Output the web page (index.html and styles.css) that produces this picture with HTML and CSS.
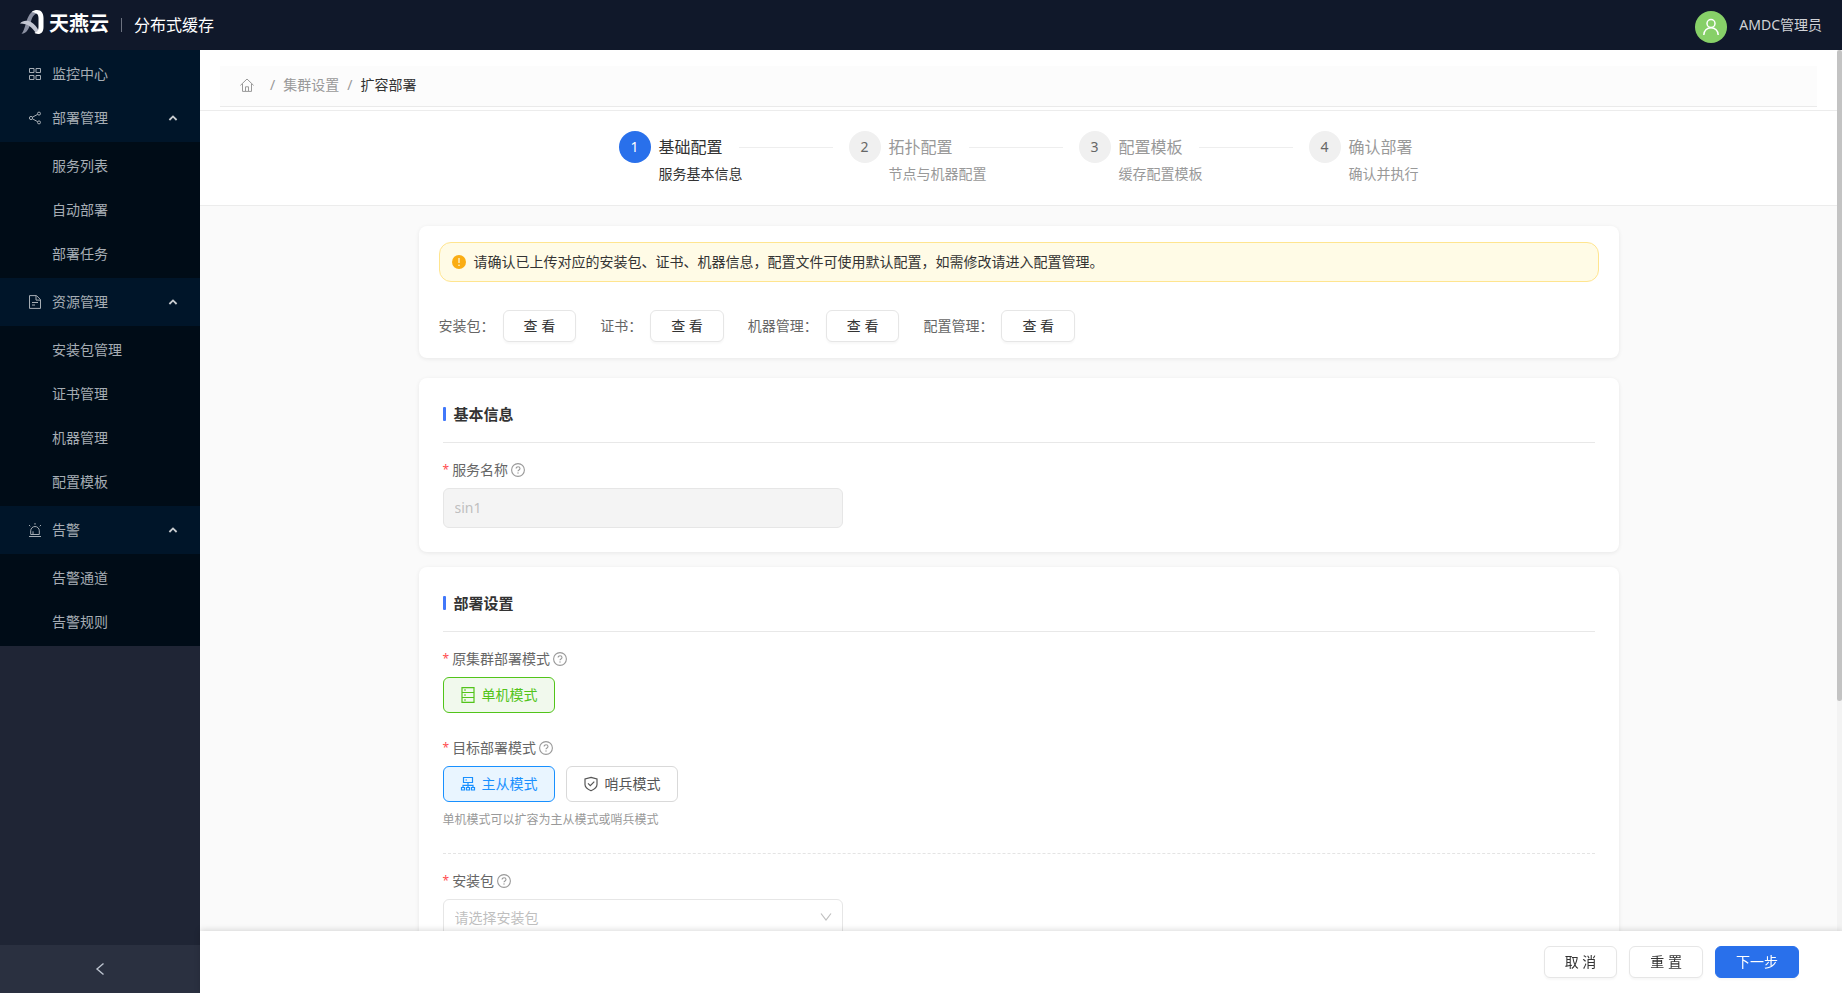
FILE: index.html
```html
<!DOCTYPE html>
<html lang="zh-CN">
<head>
    <meta charset="UTF-8">
    <title>分布式缓存</title>
    <link rel="stylesheet" href="styles.css">
</head>
<body>
    <svg class="sprite" aria-hidden="true">
        <symbol id="i-help" viewBox="0 0 14 14">
            <circle cx="7" cy="7" r="6.4" fill="none" stroke="currentColor" stroke-width="1.1"/>
            <path d="M5.1 5.6c0-2.5 3.9-2.4 3.9 0 0 1.4-2 1.3-2 2.7" fill="none" stroke="currentColor" stroke-width="1.1"/>
            <circle cx="7" cy="10" r=".7" fill="currentColor"/>
        </symbol>
        <symbol id="i-up" viewBox="0 0 10 10">
            <path d="M1.4 7 5 3.4 8.6 7" fill="none" stroke="currentColor" stroke-width="1.8"/>
        </symbol>
    </svg>

    <header class="header">
        <svg class="logo" viewBox="0 0 24 24">
            <path d="M1.500 23.800C3.500 22 4.500 18 6 13 8 6 10.500 1 16.500.200L17 3.500C13 4.500 12 8 10.500 13 9 18.500 7 23.500 1.500 23.800z" fill="#8b90a2"/>
            <path d="M0 13.500C2.500 10.500 7 10 11 12 14.500 14 17 17 18.500 20.500L16 23.500C12.500 17.500 8 13.500 0 13.500z" fill="#c3c6d2"/>
            <path d="M11.500 2.300C13.500.300 15.500 0 17 0 21.500 0 23.500 3.500 23.500 8V17C23.500 21.500 21.500 24 18 24 16.500 24 15.200 23.500 14.500 22.800 17.300 22 18.500 20.500 18.500 17V8C18.500 4.500 16.500 2.300 11.500 2.300z" fill="#fff"/>
        </svg>
        <span class="brand">天燕云</span>
        <span class="divider"></span>
        <span class="product">分布式缓存</span>
        <div class="user">
            <span class="avatar">
                <svg viewBox="0 0 18 18" width="18" height="18" fill="none" stroke="#fff" stroke-width="1.5">
                    <circle cx="9" cy="5.500" r="4"/>
                    <path d="M1.800 17c0-4.200 3.200-7.200 7.200-7.200s7.200 3 7.200 7.200"/>
                </svg>
            </span>
            <span>AMDC管理员</span>
        </div>
    </header>

    <div class="layout">
        <nav class="sider">
            <div class="menu">
                <div class="group">
                    <a class="item" href="#">
                        <svg class="icon" viewBox="0 0 14 14"><path d="M1.500 1.500h4.500v4H1.500zM8 1.500h4.500v4H8zM1.500 8.500h4.500v4H1.500zM8 8.500h4.500v4H8z"/></svg>
                        监控中心
                    </a>
                    <button class="item" type="button">
                        <svg class="icon" viewBox="0 0 14 14"><circle cx="3" cy="7" r="1.600"/><circle cx="11" cy="2.600" r="1.500"/><circle cx="11" cy="11.400" r="1.500"/><path d="M4.400 6.200l5.300-2.900M4.400 7.800l5.300 2.900"/></svg>
                        部署管理
                        <svg class="arrow"><use href="#i-up"/></svg>
                    </button>
                </div>
                <div class="submenu">
                    <a class="item" href="#">服务列表</a>
                    <a class="item" href="#">自动部署</a>
                    <a class="item" href="#">部署任务</a>
                </div>
                <div class="group">
                    <button class="item" type="button">
                        <svg class="icon" viewBox="0 0 14 14"><path d="M1.500.600h7l4 4v8.800h-11zM8 .600v4.500h4.500M4 7.500h6M4 10h3"/></svg>
                        资源管理
                        <svg class="arrow"><use href="#i-up"/></svg>
                    </button>
                </div>
                <div class="submenu">
                    <a class="item" href="#">安装包管理</a>
                    <a class="item" href="#">证书管理</a>
                    <a class="item" href="#">机器管理</a>
                    <a class="item" href="#">配置模板</a>
                </div>
                <div class="group">
                    <button class="item" type="button">
                        <svg class="icon" viewBox="0 0 14 14"><path d="M1 13.500h12M2.700 11.500V7.800a4.300 4.300 0 0 1 8.600 0v3.700zM7 0v1.700M1 2l1.300 1.300M13 2l-1.300 1.300M5 8.300v3"/></svg>
                        告警
                        <svg class="arrow"><use href="#i-up"/></svg>
                    </button>
                </div>
                <div class="submenu">
                    <a class="item" href="#">告警通道</a>
                    <a class="item" href="#">告警规则</a>
                </div>
            </div>
            <button class="trigger" type="button" aria-label="收起菜单">
                <svg viewBox="0 0 14 14" width="14" height="14" fill="none" stroke="currentColor" stroke-width="1.400"><path d="M10.500 1.500 4 7l6.500 5.500"/></svg>
            </button>
        </nav>

        <div class="page">
            <main class="main">
                <div class="topbar">
                    <div class="breadcrumb">
                        <a class="home" href="#" aria-label="首页">
                            <svg viewBox="0 0 14 14" width="14" height="14" fill="none" stroke="currentColor"><path d="M.400 7.400 7 1l6.600 6.400M2.500 6v7.400h9V6M5.500 13V8.800h3V13"/></svg>
                        </a>
                        <span>/</span>
                        <a href="#">集群设置</a>
                        <span>/</span>
                        <span class="current">扩容部署</span>
                    </div>
                </div>

                <div class="steps-wrap">
                    <div class="steps">
                        <div class="step active">
                            <span class="num">1</span>
                            <div class="step-body">
                                <div class="step-title">基础配置</div>
                                <div class="step-desc">服务基本信息</div>
                            </div>
                        </div>
                        <div class="step">
                            <span class="num">2</span>
                            <div class="step-body">
                                <div class="step-title">拓扑配置</div>
                                <div class="step-desc">节点与机器配置</div>
                            </div>
                        </div>
                        <div class="step">
                            <span class="num">3</span>
                            <div class="step-body">
                                <div class="step-title">配置模板</div>
                                <div class="step-desc">缓存配置模板</div>
                            </div>
                        </div>
                        <div class="step">
                            <span class="num">4</span>
                            <div class="step-body">
                                <div class="step-title">确认部署</div>
                                <div class="step-desc">确认并执行</div>
                            </div>
                        </div>
                    </div>
                </div>

                <div class="content">
                    <section class="card notice">
                        <div class="alert">
                            <svg viewBox="0 0 14 14" width="14" height="14"><circle cx="7" cy="7" r="7" fill="#faad14"/><path d="M7 3v5" stroke="#fffbe6" stroke-width="1.200"/><circle cx="7" cy="10.300" r=".8" fill="#fffbe6"/></svg>
                            <span>请确认已上传对应的安装包、证书、机器信息，配置文件可使用默认配置，如需修改请进入配置管理。</span>
                        </div>
                        <div class="links">
                            <div class="link-item"><span>安装包：</span><button class="btn" type="button">查 看</button></div>
                            <div class="link-item"><span>证书：</span><button class="btn" type="button">查 看</button></div>
                            <div class="link-item"><span>机器管理：</span><button class="btn" type="button">查 看</button></div>
                            <div class="link-item"><span>配置管理：</span><button class="btn" type="button">查 看</button></div>
                        </div>
                    </section>

                    <section class="card basic">
                        <h2 class="card-title">基本信息</h2>
                        <div class="field">
                            <label class="label" for="service-name">服务名称<svg class="help"><use href="#i-help"/></svg></label>
                            <input class="control" id="service-name" type="text" value="sin1" disabled>
                        </div>
                    </section>

                    <section class="card">
                        <h2 class="card-title">部署设置</h2>
                        <div class="field">
                            <div class="label">原集群部署模式<svg class="help"><use href="#i-help"/></svg></div>
                            <div class="modes">
                                <button class="mode mode-origin" type="button">
                                    <svg viewBox="0 0 16 16" width="16" height="16" fill="none" stroke="currentColor" stroke-width="1.200"><path d="M2 .600h12v14.800H2zM2 5.500h12M2 10.500h12M4 3h2M4 8h2M4 13h2"/></svg>
                                    单机模式
                                </button>
                            </div>
                        </div>
                        <div class="field">
                            <div class="label">目标部署模式<svg class="help"><use href="#i-help"/></svg></div>
                            <div class="modes">
                                <button class="mode mode-selected" type="button" aria-pressed="true">
                                    <svg viewBox="0 0 16 16" width="16" height="16" fill="none" stroke="currentColor" stroke-width="1.200"><path d="M3.500 1.500h9v5h-9zM5.500 4h1.500M8 6.500v5M3 11.500v-2.200h10v2.200M1.500 11.500h3v2.500h-3zM6.500 11.500h3v2.500h-3zM11.500 11.500h3v2.500h-3z"/></svg>
                                    主从模式
                                </button>
                                <button class="mode" type="button" aria-pressed="false">
                                    <svg viewBox="0 0 16 16" width="16" height="16" fill="none" stroke="currentColor" stroke-width="1.200"><path d="M8 1.300 14 3v5.500c0 2.800-2.500 4.700-6 6.200-3.500-1.500-6-3.400-6-6.200V3zM5 7.300l2.300 2.300 4-4"/></svg>
                                    哨兵模式
                                </button>
                            </div>
                            <div class="hint">单机模式可以扩容为主从模式或哨兵模式</div>
                        </div>
                        <hr class="dashed">
                        <div class="field">
                            <label class="label" for="package">安装包<svg class="help"><use href="#i-help"/></svg></label>
                            <div class="select-wrap">
                                <select class="control" id="package">
                                    <option>请选择安装包</option>
                                </select>
                                <svg class="caret" viewBox="0 0 12 12" fill="none" stroke="currentColor" stroke-width="1.200"><path d="M1 2.500 6 9l5-6.500"/></svg>
                            </div>
                        </div>
                    </section>
                </div>
            </main>
            <div class="scrollbar"><div class="thumb"></div></div>

            <footer class="footer">
                <button class="btn" type="button">取 消</button>
                <button class="btn" type="button">重 置</button>
                <button class="btn primary" type="button">下一步</button>
            </footer>
        </div>
    </div>
</body>
</html>
```

FILE: styles.css
```css
* {
    box-sizing: border-box;
}
body {
    margin: 0;
    height: 100vh;
    display: flex;
    flex-direction: column;
    overflow: hidden;
    font-family: "Noto Sans", "Noto Sans CJK SC", sans-serif;
    font-size: 14px;
    line-height: 22px;
    color: #333;
}
button, input, select {
    font: inherit;
    color: inherit;
}
button {
    cursor: pointer;
}
a {
    color: inherit;
    text-decoration: none;
}
.sprite {
    display: none;
}

/* header */
.header {
    height: 50px;
    flex: none;
    display: flex;
    align-items: center;
    padding: 0 20px;
    background: #10182a;
    color: #fff;
}
.logo {
    width: 24px;
    height: 24px;
    margin-bottom: 6px;
}
.brand {
    margin: 0 12px 2px 5px;
    font-size: 20px;
    font-weight: 700;
}
.divider {
    width: 1px;
    height: 14px;
    background: #6c7280;
}
.product {
    margin-left: 12px;
    font-size: 16px;
}
.user {
    margin-left: auto;
    display: flex;
    align-items: center;
    gap: 12px;
    color: #d0d2d6;
}
.avatar {
    width: 32px;
    height: 32px;
    margin-top: 4px;
    border-radius: 50%;
    background: #87d068;
    display: flex;
    align-items: center;
    justify-content: center;
}

.layout {
    flex: 1;
    display: flex;
    min-height: 0;
}

/* sidebar */
.sider {
    width: 200px;
    flex: none;
    display: flex;
    flex-direction: column;
    background: #1f2535;
}
.menu {
    flex: 1;
}
.group, .submenu {
    display: flex;
    flex-direction: column;
    gap: 4px;
    padding: 4px 0;
    background: #001529;
}
.submenu {
    background: #000c17;
}
.item {
    height: 40px;
    display: flex;
    align-items: center;
    gap: 10px;
    padding: 0 22px 0 28px;
    border: 0;
    background: none;
    color: #a6adb4;
}
.submenu .item {
    padding-left: 52px;
}
.icon {
    width: 14px;
    height: 14px;
    fill: none;
    stroke: currentColor;
}
.arrow {
    width: 10px;
    height: 10px;
    margin-left: auto;
    color: #c8ccd0;
}
.trigger {
    height: 48px;
    border: 0;
    background: #2a3040;
    color: #bcc3cf;
    display: flex;
    align-items: center;
    justify-content: center;
}

/* page */
.page {
    flex: 1;
    min-width: 0;
    display: flex;
    position: relative;
}
.main {
    flex: 1;
    min-width: 0;
    overflow-y: auto;
    scrollbar-width: none;
    background: #fafafa;
}
.scrollbar {
    width: 5px;
    background: #f3f3f3;
}
.thumb {
    height: 69%;
    border-radius: 3px;
    background: #c3c3c3;
}
.topbar {
    padding: 16px 20px 3px;
    background: #fff;
    border-bottom: 1px solid #ececec;
}
.breadcrumb {
    height: 41px;
    display: flex;
    align-items: center;
    gap: 8px;
    padding: 0 20px 2px;
    background: #fcfcfc;
    border-bottom: 1px solid #eaeaea;
    color: #999;
}
.home {
    display: flex;
    margin-right: 8px;
}
.current {
    color: #333;
}

/* steps */
.steps-wrap {
    padding: 20px;
    background: #fff;
    border-bottom: 1px solid #ececec;
}
.steps {
    max-width: 800px;
    margin: 0 auto;
    display: flex;
    gap: 16px;
}
.step {
    flex: 1;
    display: flex;
    gap: 8px;
    color: #999;
}
.step:last-child {
    flex: none;
}
.num {
    width: 32px;
    height: 32px;
    flex: none;
    border-radius: 50%;
    background: #f0f0f0;
    color: #666;
    text-align: center;
    line-height: 32px;
}
.step-body {
    flex: 1;
}
.step-title {
    display: flex;
    align-items: center;
    gap: 16px;
    font-size: 16px;
    line-height: 32px;
}
.step:not(:last-child) .step-title::after {
    content: "";
    flex: 1;
    height: 1px;
    background: #eee;
}
.active {
    color: #333;
}
.active .num {
    background: #2970eb;
    color: #fff;
}

/* cards */
.content {
    max-width: 1240px;
    margin: 0 auto;
    padding: 20px 20px 464px;
}
.card {
    padding: 24px;
    background: #fff;
    border-radius: 8px;
    box-shadow: 0 1px 4px rgba(0, 0, 0, 0.08);
}
.notice {
    padding: 16px 20px;
    margin-bottom: 20px;
}
.basic {
    margin-bottom: 15px;
}
.alert {
    height: 40px;
    display: flex;
    align-items: center;
    gap: 8px;
    padding: 0 12px;
    margin-bottom: 28px;
    background: #fffbe6;
    border: 1px solid #ffe58f;
    border-radius: 12px;
}
.links {
    display: flex;
    gap: 24px;
    color: #666;
}
.link-item {
    display: flex;
    align-items: center;
    gap: 8px;
}
.btn {
    height: 32px;
    padding: 0 20px;
    border: 1px solid #e6e6e6;
    border-radius: 6px;
    background: #fff;
    color: #333;
    box-shadow: 0 2px 2px rgba(0, 0, 0, 0.03);
}
.primary {
    border-color: #2970eb;
    background: #2970eb;
    color: #fff;
}
.card-title {
    display: flex;
    align-items: center;
    gap: 8px;
    margin: 0 0 16px;
    padding-bottom: 16px;
    border-bottom: 1px solid #e8e8e8;
    font-size: 15px;
    font-weight: 600;
    line-height: 24px;
}
.card-title::before {
    content: "";
    width: 3px;
    height: 14px;
    border-radius: 1px;
    background: #4178fa;
}
.field + .field {
    margin-top: 24px;
}
.label {
    display: flex;
    align-items: center;
    margin-bottom: 7px;
    color: #666;
}
.label::before {
    content: "*";
    margin-right: 3px;
    color: #ff4d4f;
    font-size: 12px;
}
.help {
    width: 14px;
    height: 14px;
    margin-left: 3px;
    color: #999;
}
.control {
    display: block;
    width: 100%;
    max-width: 400px;
    height: 40px;
    padding: 0 11px 2px;
    border: 1px solid #e6e6e6;
    border-radius: 6px;
    background: #fff;
    color: #bfbfbf;
    appearance: none;
}
.control:disabled {
    background: #f4f4f4;
    opacity: 1;
}
.select-wrap {
    position: relative;
    max-width: 400px;
}
.caret {
    position: absolute;
    top: 12px;
    right: 11px;
    width: 12px;
    height: 12px;
    color: #bfbfbf;
    pointer-events: none;
}
.modes {
    display: flex;
    gap: 11px;
}
.mode {
    height: 36px;
    display: flex;
    align-items: center;
    gap: 6px;
    padding: 0 16px;
    border: 1px solid #d9d9d9;
    border-radius: 6px;
    background: #fff;
    color: #555;
}
.mode-origin {
    border-color: #52c41a;
    background: #f1f9ed;
    color: #52c41a;
}
.mode-selected {
    border-color: #1890ff;
    background: #e9f5ff;
    color: #1890ff;
}
.hint {
    margin-top: 8px;
    font-size: 12px;
    line-height: 20px;
    color: #999;
}
.dashed {
    margin: 23px 0 16px;
    border: 0;
    border-top: 1px dashed #e4e4e4;
}

/* action bar pinned over the scroll area */
.footer {
    position: absolute;
    left: 0;
    right: 0;
    bottom: 0;
    display: flex;
    justify-content: flex-end;
    gap: 12px;
    padding: 15px 43px;
    background: #fff;
    box-shadow: 0 -1px 6px rgba(0, 0, 0, 0.15);
}
```
